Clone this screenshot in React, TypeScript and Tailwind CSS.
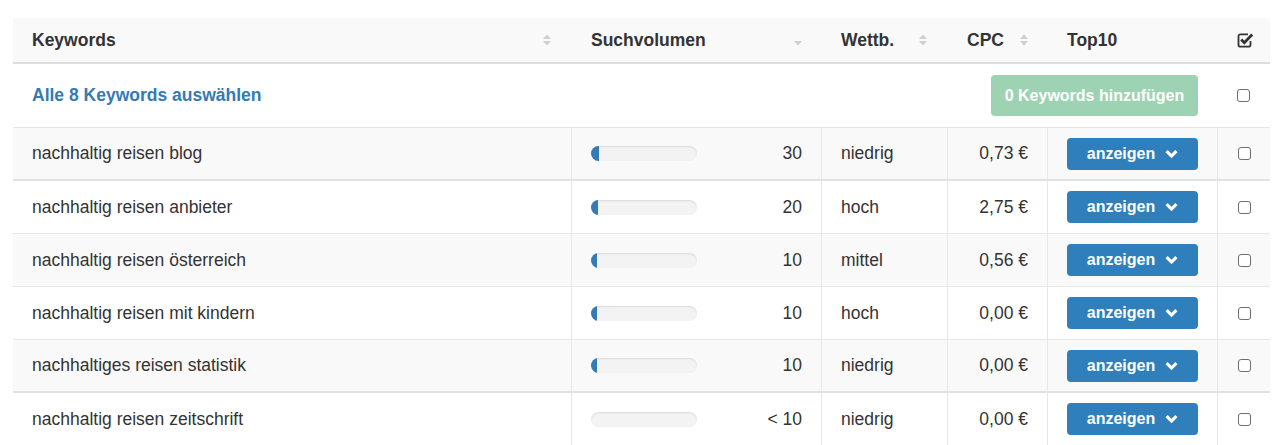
import React from "react";

function SortIcon({ desc = false }: { desc?: boolean }) {
  return (
    <svg width="8" height="14" viewBox="0 0 8 14" className="shrink-0">
      {!desc && <path d="M0 6 L4 1.5 L8 6 Z" fill="#cfcfcf" />}
      <path d="M0 8 L8 8 L4 12.5 Z" fill="#cfcfcf" />
    </svg>
  );
}

function CheckSquare() {
  return (
    <svg width="17" height="16" viewBox="0 0 17 16">
      <path
        d="M11 2.4 H3.4 A1.9 1.9 0 0 0 1.5 4.3 V12.8 A1.9 1.9 0 0 0 3.4 14.7 H11.6 A1.9 1.9 0 0 0 13.5 12.8 V9"
        fill="none"
        stroke="#333"
        strokeWidth="1.8"
      />
      <path d="M4.2 7.6 L7.3 10.7 L15.2 2.6" fill="none" stroke="#333" strokeWidth="2.8" />
    </svg>
  );
}

function Chevron() {
  return (
    <svg width="13" height="10" viewBox="0 0 13 10" className="shrink-0">
      <path d="M1.6 2.2 L6.5 7.1 L11.4 2.2" fill="none" stroke="#fff" strokeWidth="3.2" />
    </svg>
  );
}

function Box() {
  return (
    <span className="block w-[13px] h-[13px] border border-[#6e6e6e] rounded-[3px] bg-white" />
  );
}

type Row = { kw: string; vol: string; fill: number; comp: string; cpc: string };

const rows: Row[] = [
  { kw: "nachhaltig reisen blog", vol: "30", fill: 8, comp: "niedrig", cpc: "0,73 €" },
  { kw: "nachhaltig reisen anbieter", vol: "20", fill: 7, comp: "hoch", cpc: "2,75 €" },
  { kw: "nachhaltig reisen österreich", vol: "10", fill: 6, comp: "mittel", cpc: "0,56 €" },
  { kw: "nachhaltig reisen mit kindern", vol: "10", fill: 6, comp: "hoch", cpc: "0,00 €" },
  { kw: "nachhaltiges reisen statistik", vol: "10", fill: 6, comp: "niedrig", cpc: "0,00 €" },
  { kw: "nachhaltig reisen zeitschrift", vol: "< 10", fill: 0, comp: "niedrig", cpc: "0,00 €" },
];

export default function App() {
  return (
    <div className="min-h-screen bg-white pt-[18px] px-[13px] font-['Liberation_Sans',Arial,sans-serif] text-[17.5px] text-[#333]">
      <div className="w-[1257px]">
        {/* header */}
        <div className="flex h-[46px] items-center bg-[#f9f9f9] border-b-2 border-[#dddddd] font-bold">
          <div className="w-[558px] flex items-center justify-between pl-[19px] pr-[20px]">
            <span>Keywords</span>
            <SortIcon />
          </div>
          <div className="w-[250px] flex items-center justify-between pl-[20px] pr-[19px]">
            <span>Suchvolumen</span>
            <SortIcon desc />
          </div>
          <div className="w-[126px] flex items-center justify-between pl-[20px] pr-[20px]">
            <span>Wettb.</span>
            <SortIcon />
          </div>
          <div className="w-[100px] flex items-center justify-between pl-[20px] pr-[19px]">
            <span>CPC</span>
            <SortIcon />
          </div>
          <div className="w-[170px] pl-[20px]">
            <span>Top10</span>
          </div>
          <div className="w-[53px] flex justify-center pl-[3px]">
            <CheckSquare />
          </div>
        </div>

        {/* select all row */}
        <div className="flex h-[64px] items-center border-b border-[#e6e6e6] bg-white">
          <div className="flex-1 pl-[19px] font-bold text-[#337ab7]">Alle 8 Keywords auswählen</div>
          <button className="mr-[19px] h-[41px] w-[207px] rounded-[4px] bg-[#9dd2b2] text-white font-bold text-[16px]">
            0 Keywords hinzufügen
          </button>
          <div className="w-[53px] flex justify-center">
            <Box />
          </div>
        </div>

        {rows.map((r, i) => {
          const thick = i === 0 || i === 4;
          const striped = i % 2 === 0;
          return (
            <div
              key={i}
              className={`flex h-[53px] ${thick ? "border-b-2 border-[#e2e2e2]" : "border-b border-[#e8e8e8]"} ${
                striped ? "bg-[#f9f9f9]" : "bg-white"
              }`}
            >
              <div className="w-[558px] flex items-center pl-[19px]">{r.kw}</div>
              <div className="w-[250px] flex items-center justify-between border-l border-[#e8e8e8] pl-[19px] pr-[19px]">
                <div className="w-[106px] h-[15px] rounded-full bg-[#f3f3f3] shadow-[inset_0_1px_2px_rgba(0,0,0,0.1)] overflow-hidden">
                  <div className="h-full bg-[#337ab7]" style={{ width: r.fill }} />
                </div>
                <span>{r.vol}</span>
              </div>
              <div className="w-[126px] flex items-center border-l border-[#e8e8e8] pl-[19px]">{r.comp}</div>
              <div className="w-[100px] flex items-center justify-end border-l border-[#e8e8e8] pr-[19px]">{r.cpc}</div>
              <div className="w-[170px] flex items-center border-l border-[#e8e8e8] pl-[19px]">
                <button className="flex items-center justify-center gap-[10px] w-[131px] h-[32px] rounded-[4px] bg-[#2e7fbb] text-white font-bold text-[16px]">
                  <span>anzeigen</span>
                  <Chevron />
                </button>
              </div>
              <div className="w-[53px] flex items-center justify-center border-l border-[#e8e8e8]">
                <Box />
              </div>
            </div>
          );
        })}
      </div>
    </div>
  );
}
